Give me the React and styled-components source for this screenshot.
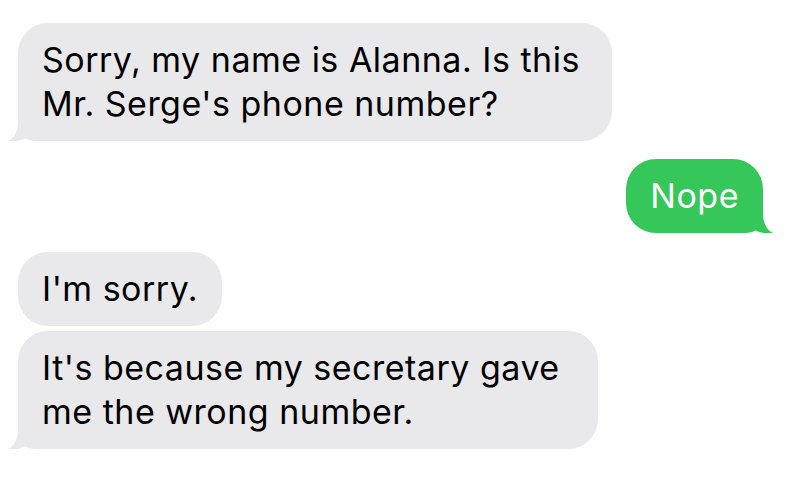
import React from "react";
import styled, { createGlobalStyle } from "styled-components";

const Global = createGlobalStyle`
  html, body { margin: 0; padding: 0; background: #ffffff; }
  body { font-family: Inter, "Liberation Sans", Arial, sans-serif; -webkit-font-smoothing: antialiased; }
`;

const Thread = styled.div`
  width: 789px;
  height: 480px;
  box-sizing: border-box;
  padding: 23px 26px 0 18px;
  display: flex;
  flex-direction: column;
  overflow: hidden;
`;

const Bubble = styled.div`
  position: relative;
  align-self: ${(p) => (p.$sent ? "flex-end" : "flex-start")};
  margin-top: ${(p) => p.$gap || 0}px;
  padding: 15px ${(p) => p.$padR || 24}px 15px 24px;
  font-size: 34px;
  line-height: 44px;
  letter-spacing: 0.5px;
  white-space: nowrap;
  color: ${(p) => (p.$sent ? "#ffffff" : "#000000")};
  background: ${(p) => (p.$sent ? "#35c759" : "#e9e9eb")};
  border-radius: 30px;
  ${(p) =>
    p.$tail
      ? p.$sent
        ? "border-bottom-right-radius: 20px;"
        : "border-bottom-left-radius: 20px;"
      : ""}
`;

const TailSvg = styled.svg`
  position: absolute;
  bottom: 0;
  width: 30px;
  height: 28px;
  ${(p) => (p.$sent ? "right: -10px; transform: scaleX(-1);" : "left: -10px;")}
`;

const Tail = ({ sent }) => (
  <TailSvg $sent={sent} viewBox="0 0 30 28" aria-hidden="true">
    <path
      d="M10 0 H30 V28 C25 28 21 27.6 17.5 25.6 C13 28 6 28.6 0 28 C6 25 10 19 10 8 Z"
      fill={sent ? "#35c759" : "#e9e9eb"}
    />
  </TailSvg>
);

export default function App() {
  return (
    <>
      <Global />
      <Thread>
        <Bubble $tail $padR={32}>
          Sorry, my name is Alanna. Is this
          <br />
          Mr. Serge's phone number?
          <Tail />
        </Bubble>
        <Bubble $sent $tail $gap={18}>
          Nope
          <Tail sent />
        </Bubble>
        <Bubble $gap={19}>I'm sorry.</Bubble>
        <Bubble $tail $gap={5} $padR={38}>
          It's because my secretary gave
          <br />
          me the wrong number.
          <Tail />
        </Bubble>
      </Thread>
    </>
  );
}
